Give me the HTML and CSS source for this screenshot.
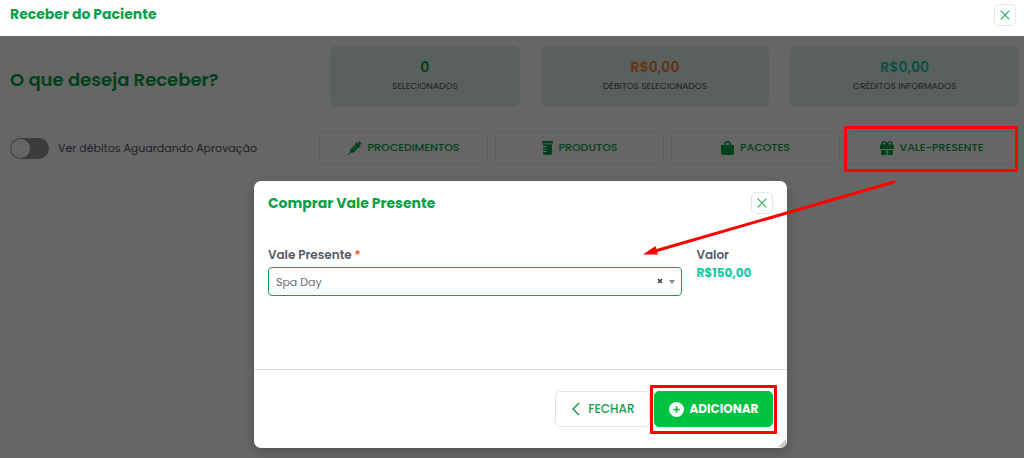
FILE: index.html
```html
<!DOCTYPE html>
<html lang="pt-BR">
<head>
    <meta charset="UTF-8">
    <meta name="viewport" content="width=device-width, initial-scale=1.0">
    <title>Receber do Paciente</title>
    <link rel="stylesheet" href="styles.css">
</head>
<body>
    <header class="page-header">
        <h1>Receber do Paciente</h1>
        <button class="close-btn" aria-label="Fechar">
            <svg viewBox="0 0 10 10" width="10" height="10"><path d="M.7.7l8.6 8.6M9.3.7L.7 9.3"/></svg>
        </button>
    </header>

    <main class="content">
        <div class="summary">
            <h2>O que deseja Receber?</h2>
            <div class="cards">
                <div class="card">
                    <strong class="green">0</strong>
                    <span>SELECIONADOS</span>
                </div>
                <div class="card">
                    <strong class="orange">R$0,00</strong>
                    <span>DÉBITOS SELECIONADOS</span>
                </div>
                <div class="card">
                    <strong class="teal">R$0,00</strong>
                    <span>CRÉDITOS INFORMADOS</span>
                </div>
            </div>
        </div>

        <div class="actions">
            <label class="switch" for="pending">
                <input type="checkbox" id="pending">
                Ver débitos Aguardando Aprovação
            </label>
            <div class="action-buttons">
                <button class="action-btn">
                    <!-- Syringe -->
                    <svg viewBox="0 0 14 14" width="14" height="14"><path d="M10.200.8l.9-.8L14 2.900l-.8.9-.8-.5-.8.9 1.300 1.300-1 1-.8-.5-5.600 5.600-3 .3L.8 14 0 13.200l2-1.800.3-3L7.900 2.900l-.6-.8 1-1 1.400 1.300.9-.8z"/><path class="cut" d="M5 7.200l1.300 1.300M7 5.200l1.300 1.300"/></svg>
                    PROCEDIMENTOS
                </button>
                <button class="action-btn">
                    <!-- Measuring jar -->
                    <svg viewBox="0 0 11 14" width="11" height="14"><path d="M.5 0h10a.5.5 0 0 1 .5.500V2.500H0V.5A.5.5 0 0 1 .5 0zM1 3.300h9V12a2 2 0 0 1-2 2H3a2 2 0 0 1-2-2z"/><path class="cut" d="M1 5.500h3.500M1 8h3.500M1 10.500h3.500"/></svg>
                    PRODUTOS
                </button>
                <button class="action-btn">
                    <!-- Shopping bag -->
                    <svg viewBox="0 0 13 14" width="13" height="14"><path fill-rule="evenodd" d="M3.200 4V3.300a3.300 3.300 0 0 1 6.600 0V4H13v7.500a2.500 2.500 0 0 1-2.500 2.500h-8A2.500 2.500 0 0 1 0 11.500V4zm1.500 0h3.600v-.7a1.800 1.800 0 0 0-3.600 0z"/><path class="cut" d="M4 5.300v1M9 5.300v1"/></svg>
                    PACOTES
                </button>
                <button class="action-btn marked">
                    <!-- Gift -->
                    <svg viewBox="0 0 14 14" width="14" height="14"><path fill-rule="evenodd" d="M0 4.500A1 1 0 0 1 1 3.500h.9C1 1.600 2.200 0 4 0c1.500 0 2.200.8 3 2.200C7.800.8 8.500 0 10 0c1.800 0 3 1.600 2.100 3.500h.9a1 1 0 0 1 1 1V8H0zM5.900 3.500C5.200 2 4.700 1.300 4 1.300c-1.300 0-1.300 2.200 0 2.200zm2.200 0H10c1.300 0 1.300-2.200 0-2.200-.7 0-1.200.7-1.900 2.200zM1 9h5.400v5H2a1 1 0 0 1-1-1zM7.600 9H13v4a1 1 0 0 1-1 1H7.600z"/></svg>
                    VALE-PRESENTE
                </button>
            </div>
        </div>
    </main>

    <div class="modal" role="dialog" aria-labelledby="modal-title">
        <div class="modal-header">
            <h2 id="modal-title">Comprar Vale Presente</h2>
            <button class="close-btn" aria-label="Fechar">
                <svg viewBox="0 0 10 10" width="10" height="10"><path d="M.7.7l8.6 8.6M9.3.7L.7 9.3"/></svg>
            </button>
        </div>
        <div class="modal-body">
            <div class="field">
                <label for="voucher">Vale Presente <span class="required">*</span></label>
                <div class="select-box">
                    <select id="voucher">
                        <option>Spa Day</option>
                    </select>
                    <button class="clear-btn" aria-label="Limpar">
                        <svg viewBox="0 0 6 6" width="6" height="6"><path d="M1 1l4 4M5 1L1 5"/></svg>
                    </button>
                    <svg class="caret" viewBox="0 0 6 4" width="6" height="4"><path d="M0 0h6L3 4z"/></svg>
                </div>
            </div>
            <div class="price">
                <span>Valor</span>
                <strong>R$150,00</strong>
            </div>
        </div>
        <div class="modal-footer">
            <button class="btn">
                <svg viewBox="0 0 8 14" width="8" height="14"><path d="M7 1L1 7l6 6" fill="none" stroke="currentColor" stroke-width="1.500"/></svg>
                FECHAR
            </button>
            <button class="btn btn-primary marked">
                <svg viewBox="0 0 14 14" width="15" height="15"><circle cx="7" cy="7" r="7" fill="currentColor"/><path d="M7 4v6M4 7h6" stroke="#00c241" stroke-width="1.500"/></svg>
                ADICIONAR
            </button>
        </div>
        <svg class="grip" viewBox="0 0 8 8" width="8" height="8"><path d="M8 0v4a4 4 0 0 1-4 4H0z"/></svg>
    </div>

    <!-- Arrow from the gift button to the voucher field -->
    <svg class="arrow" viewBox="0 0 254 76" width="254" height="76"><path d="M251 2L12 71" fill="none" stroke="#f00" stroke-width="3" stroke-linecap="round"/><path d="M0 74.500l12.500-8.500 2.500 8.500z" fill="#f00"/></svg>
</body>
</html>
```
FILE: styles.css
```css
* {
    margin: 0;
    padding: 0;
    box-sizing: border-box;
    font-family: Poppins, Inter, sans-serif;
}

body {
    min-height: 100vh;
    display: flex;
    flex-direction: column;
    position: relative;
    background: white;
    color: #4a4f57;
}

button {
    cursor: pointer;
}

.page-header {
    display: flex;
    justify-content: space-between;
    height: 36px;
    padding: 4px 8px 0 10px;
}

h1,
.modal-header h2 {
    color: #0a9f48;
    font-size: 14px;
    line-height: 20px;
    font-weight: 700;
}

.close-btn {
    display: flex;
    align-items: center;
    justify-content: center;
    width: 22px;
    height: 22px;
    background: white;
    border: 1px solid #e6e6e6;
    border-radius: 5px;
}

.close-btn path {
    stroke: #2fae62;
    stroke-width: 1.2;
}

.content {
    flex: 1;
    position: relative;
    padding: 10px 5px 0 10px;
}

/* Backdrop */
.content::after {
    content: "";
    position: absolute;
    inset: 0;
    background: rgba(0, 0, 0, 0.6);
}

.summary {
    display: grid;
    grid-template-columns: 320px 1fr;
    align-items: center;
}

.summary h2 {
    color: #00a046;
    font-size: 18px;
    line-height: 28px;
    font-weight: 600;
    padding-top: 6px;
}

.cards {
    display: grid;
    grid-template-columns: 190fr 229fr 229fr;
    gap: 21px;
}

.card {
    display: flex;
    flex-direction: column;
    align-items: center;
    padding: 10px 0 12px;
    background: #e1efeb;
    border-radius: 6px;
}

.card strong {
    font-size: 14px;
    line-height: 22px;
    font-weight: 600;
}

.card span {
    font-size: 9px;
    line-height: 17px;
}

.green {
    color: #00a046;
}

.orange {
    color: #ff8126;
}

.teal {
    color: #14c9a4;
}

.actions {
    display: grid;
    grid-template-columns: 309px 1fr;
    align-items: center;
    margin-top: 24px;
    padding-right: 3px;
}

.switch {
    display: flex;
    align-items: center;
    gap: 9px;
    font-size: 11px;
}

.switch input {
    appearance: none;
    width: 39px;
    height: 21px;
    padding: 1px;
    background: #969696;
    border-radius: 11px;
}

.switch input::before {
    content: "";
    display: block;
    width: 19px;
    height: 19px;
    background: white;
    border-radius: 50%;
}

.switch input:checked::before {
    margin-left: auto;
}

.action-buttons {
    display: grid;
    grid-template-columns: repeat(4, 1fr);
    gap: 7px;
}

.action-btn {
    display: flex;
    align-items: center;
    justify-content: center;
    gap: 6px;
    height: 34px;
    padding-bottom: 1px;
    background: white;
    border: 1px solid #ebebeb;
    border-radius: 5px;
    color: #00a046;
    font-size: 11px;
    font-weight: 500;
}

.action-btn svg {
    fill: currentColor;
}

.action-btn .cut {
    fill: none;
    stroke: white;
    stroke-width: 1;
}

/* Red highlight around a button */
.marked {
    position: relative;
}

.marked::after {
    content: "";
    position: absolute;
    inset: -6px -3px -8px -4px;
    border: 3px solid #f00;
    border-radius: 1px;
}

/* Keeps the highlight above the backdrop */
.action-btn.marked::after {
    z-index: 1;
}

.modal {
    position: absolute;
    top: 181px;
    left: 24.8%;
    width: 52.1%;
    background: white;
    border-radius: 7px;
    box-shadow: 0 4px 12px rgba(0, 0, 0, 0.2);
}

.modal-header {
    display: flex;
    align-items: center;
    justify-content: space-between;
    padding: 11px 14px;
}

.modal-body {
    display: grid;
    grid-template-columns: 1fr 77px;
    gap: 14px;
    min-height: 145px;
    padding: 20px 14px 0;
    border-bottom: 1px solid #dedede;
}

.field label,
.price span {
    font-size: 12px;
    line-height: 20px;
    font-weight: 600;
    color: #565b65;
}

.field label {
    display: block;
    margin-bottom: 2px;
}

.required {
    color: #ff4424;
}

.select-box {
    position: relative;
}

select {
    appearance: none;
    display: block;
    width: 100%;
    height: 29px;
    padding: 0 7px;
    background: white;
    border: 1px solid #159c4e;
    border-radius: 4px;
    color: #6b7078;
    font-size: 11px;
}

.clear-btn {
    position: absolute;
    top: 8px;
    right: 16px;
    display: flex;
    align-items: center;
    justify-content: center;
    width: 12px;
    height: 12px;
    background: none;
    border: none;
}

.clear-btn path {
    stroke: #444;
    stroke-width: 1.7;
}

.caret {
    position: absolute;
    top: 13px;
    right: 7px;
    fill: #888;
    pointer-events: none;
}

.price {
    display: flex;
    flex-direction: column;
}

.price strong {
    color: #14cba8;
    font-size: 12px;
    line-height: 16px;
    font-weight: 700;
}

.modal-footer {
    display: flex;
    justify-content: flex-end;
    gap: 4px;
    padding: 21px 14px;
}

.btn {
    display: flex;
    align-items: center;
    justify-content: center;
    gap: 8px;
    height: 36px;
    padding: 0 14px 0 16px;
    background: white;
    border: 1px solid #e4e4e4;
    border-radius: 5px;
    color: #159c4e;
    font-size: 12px;
    font-weight: 500;
}

.btn-primary {
    gap: 6px;
    padding: 0 14px;
    background: #00c241;
    border-color: #00c241;
    color: white;
    font-weight: 700;
}

.btn-primary.marked::after {
    inset: -7px -5px -8px -5px;
}

.grip {
    position: absolute;
    right: 1px;
    bottom: 1px;
    fill: #c8c8c8;
}

.arrow {
    position: absolute;
    top: 180px;
    left: 643px;
    pointer-events: none;
}
```
